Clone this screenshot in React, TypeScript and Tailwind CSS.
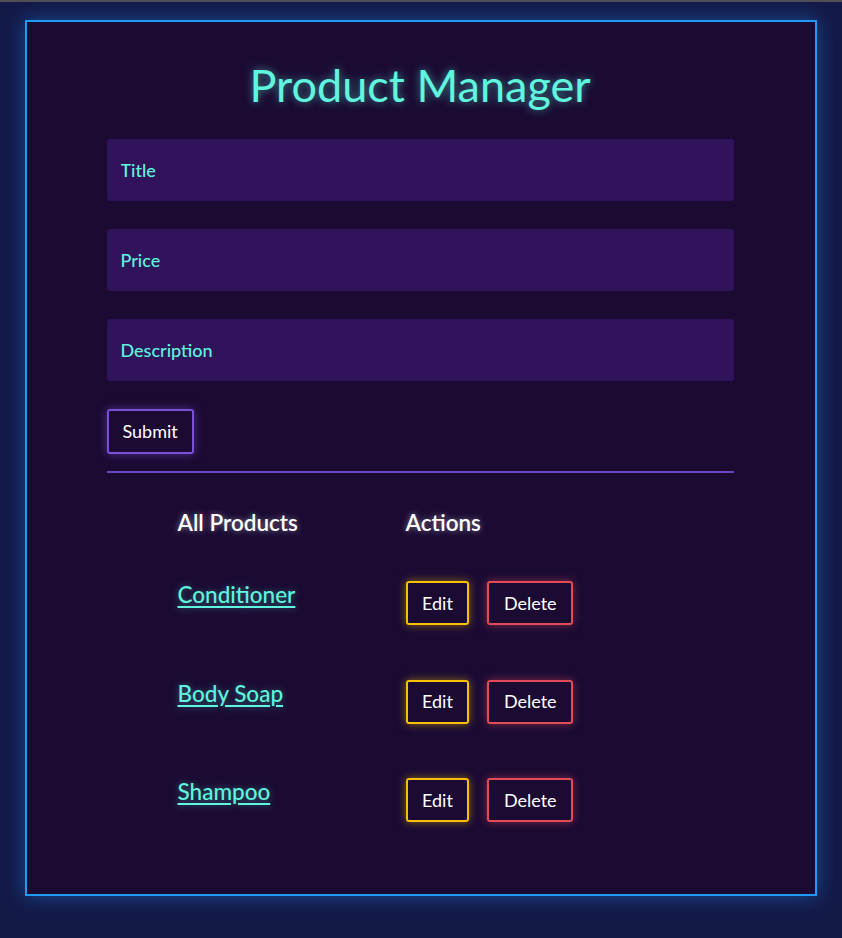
import { useState } from "react";

const products = [
  { id: 1, title: "Conditioner" },
  { id: 2, title: "Body Soap" },
  { id: 3, title: "Shampoo" },
];

export default function App() {
  const [title, setTitle] = useState("");
  const [price, setPrice] = useState("");
  const [description, setDescription] = useState("");

  return (
    <div className="min-h-screen bg-[#141a48] font-['Lato','Noto_Sans',sans-serif]">
      <div className="h-[2px] bg-[#4f4f55]" />
      <div className="px-[25px] pt-[18px]">
        {/* card */}
        <div className="flex h-[876px] flex-col items-center border-2 border-[#1f9bf5] bg-[#1b0b33] pr-[2px] pt-[36px] shadow-[0_0_18px_rgba(30,140,245,0.45)]">
          <h1 className="text-[45px] leading-[54px] text-[#5ff5de] [text-shadow:0_0_8px_rgba(95,245,222,0.55)]">
            Product Manager
          </h1>

          <form
            className="mt-[27px] flex w-[627px] flex-col"
            onSubmit={(e) => e.preventDefault()}>
            {[
              { ph: "Title", value: title, set: setTitle },
              { ph: "Price", value: price, set: setPrice },
              { ph: "Description", value: description, set: setDescription },
            ].map((f) => (
              <input
                key={f.ph}
                type="text"
                value={f.value}
                onChange={(e) => f.set(e.target.value)}
                placeholder={f.ph}
                className="mb-[28px] h-[62px] rounded-[3px] bg-[#30135b] px-[14px] text-[18px] font-medium text-[#5ff5de] outline-none placeholder:text-[#5ff5de]"
              />
            ))}
            <div>
              <button
                type="submit"
                className="h-[45px] rounded-[3px] border-2 border-[#7b4fd6] px-[14px] text-[18px] text-white shadow-[0_0_8px_rgba(123,79,214,0.55)]">
                Submit
              </button>
            </div>
          </form>

          <div className="mt-[17px] h-[2px] w-[627px] bg-[#6e44c6]" />

          {/* products table */}
          <div className="mt-[35px] w-[627px] pl-[71px]">
            <div className="flex text-[22.5px] font-semibold leading-[30px] text-white [text-shadow:0_0_6px_rgba(255,255,255,0.45)]">
              <span className="w-[228px]">All Products</span>
              <span>Actions</span>
            </div>
            <div className="mt-[43px] flex flex-col gap-[54.5px]">
              {products.map((p) => (
                <div key={p.id} className="flex items-start">
                  <a
                    href="#"
                    className="mt-[-1px] w-[228px] text-[22.5px] font-medium leading-[30px] text-[#5ff5de] underline underline-offset-[3px] [text-shadow:0_0_6px_rgba(95,245,222,0.4)]">
                    {p.title}
                  </a>
                  <div className="flex gap-[18px]">
                    <button
                      type="button"
                      className="h-[44px] rounded-[3px] border-2 border-[#f7c000] px-[14.5px] text-[18px] text-white shadow-[0_0_8px_rgba(247,192,0,0.5)]">
                      Edit
                    </button>
                    <button
                      type="button"
                      className="h-[44px] rounded-[3px] border-2 border-[#e24b57] px-[14.5px] text-[18px] text-white shadow-[0_0_8px_rgba(226,75,87,0.5)]">
                      Delete
                    </button>
                  </div>
                </div>
              ))}
            </div>
          </div>
        </div>
      </div>
    </div>
  );
}
